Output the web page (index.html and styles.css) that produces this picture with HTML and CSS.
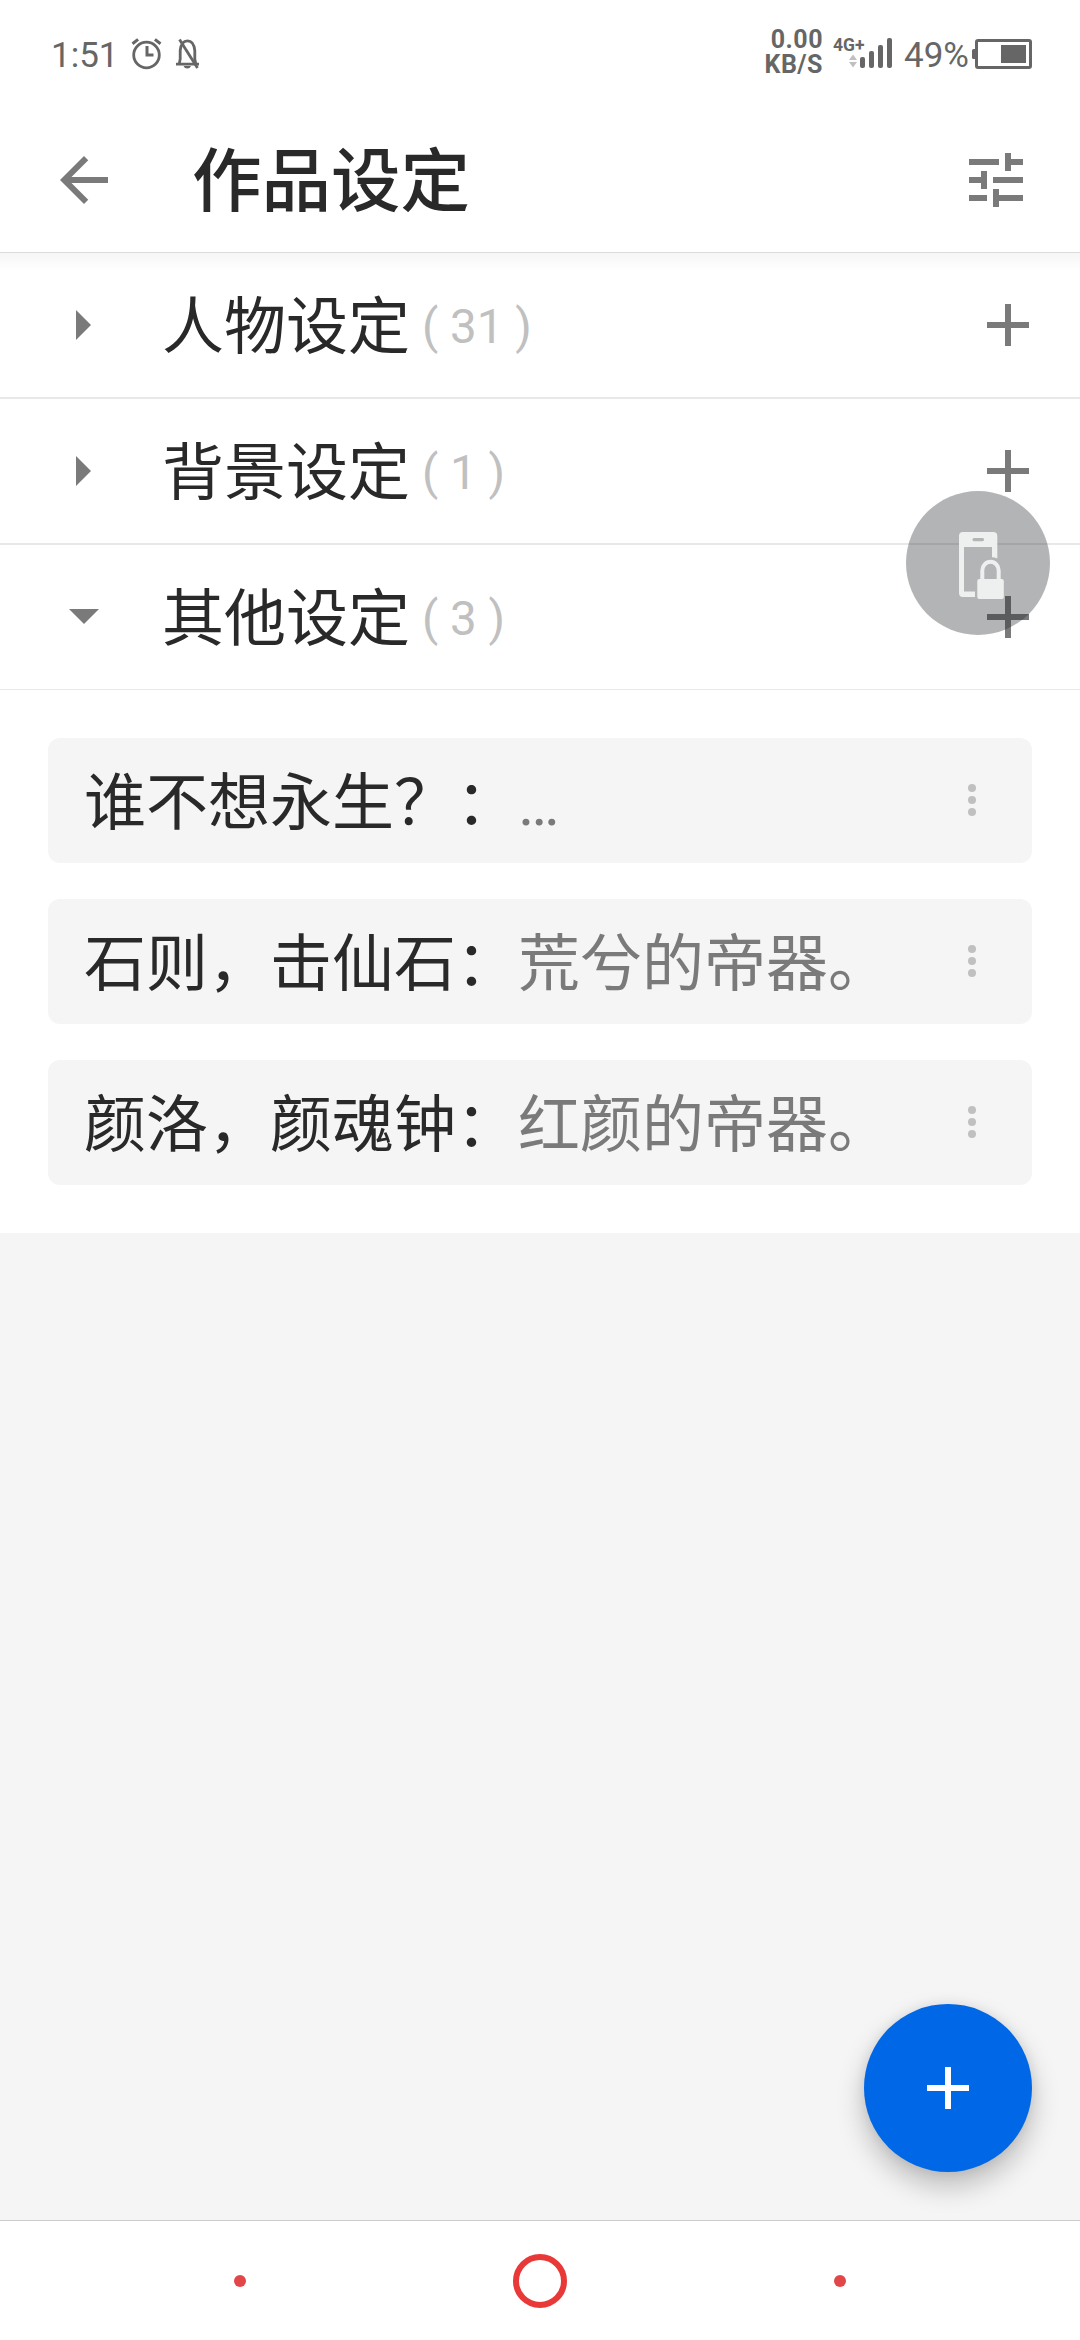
FILE: index.html
```html
<!DOCTYPE html>
<html lang="zh-CN">
<head>
  <meta charset="UTF-8">
  <title>作品设定</title>
  <link rel="stylesheet" href="styles.css">
</head>
<body>
  <div class="status-bar">
    <span class="time">1:51</span>
    <svg class="status-icons" width="72" height="36" viewBox="130 36 72 36">
      <g fill="none" stroke="#666" stroke-width="2.8">
        <circle cx="146.5" cy="55" r="12.8"/>
        <path d="M132.5 43.8l5.6-4.4M160.5 43.8l-5.6-4.4" stroke-width="3"/>
        <path d="M147 46v9h6.500" stroke-width="3"/>
        <path d="M176 64.200h23M179.200 64l1-5V50.500q1-9.700 7.300-9.700t7.300 9.700V59l1 5" stroke-width="2.800"/>
        <path d="M179.500 39.500L197.500 68"/>
      </g>
      <path d="M183.500 66h7.500q-1 2.500-3.700 2.500t-3.800-2.500z" fill="#666"/>
    </svg>
    <div class="status-right">
      <div class="speed">0.00<br>KB/S</div>
      <div class="signal">
        <span class="net">4G+</span>
        <svg width="60" height="36" viewBox="832 36 60 36">
          <path d="M848 60l4-5.500 4 5.500zM848 62l4 5.500 4-5.500z" fill="#c0c0c0"/>
          <g fill="#666">
            <rect x="859" y="57" width="5" height="11" rx="2"/>
            <rect x="868" y="51" width="5" height="17" rx="2"/>
            <rect x="877" y="45" width="5" height="23" rx="2"/>
            <rect x="886" y="38" width="5" height="30" rx="2"/>
          </g>
        </svg>
      </div>
      <span class="percent">49%</span>
      <svg class="battery" width="60" height="36" viewBox="972 36 60 36">
        <rect x="976.500" y="40.500" width="54" height="27" rx="1.500" fill="none" stroke="#666" stroke-width="3"/>
        <path d="M975 49h-1.500q-1.500 0-1.500 1.500v7q0 1.500 1.500 1.500h1.500zM1001 45h25v18h-25z" fill="#666"/>
      </svg>
    </div>
  </div>

  <div class="header">
    <svg class="icon" viewBox="0 0 24 24"><path d="M20 11H7.830l5.590-5.590L12 4l-8 8 8 8 1.410-1.410L7.830 13H20v-2z"/></svg>
    <h1 class="title">作品设定</h1>
    <svg class="icon" viewBox="0 0 24 24"><path d="M3 17v2h6v-2H3zM3 5v2h10V5H3zm10 16v-2h8v-2h-8v-2h-2v6h2zM7 9v2H3v2h4v2h2V9H7zm14 4v-2H11v2h10zm-6-4h2V7h4V5h-4V3h-2v6z"/></svg>
  </div>

  <div class="content">
    <div class="group first">
      <svg class="icon" viewBox="0 0 72 72"><path d="M28 21l15 15-15 15z"/></svg>
      <span class="group-name">人物设定</span>
      <span class="count">( 31 )</span>
      <svg class="icon add" viewBox="0 0 24 24"><path d="M19 13h-6v6h-2v-6H5v-2h6V5h2v6h6v2z"/></svg>
    </div>
    <div class="group">
      <svg class="icon" viewBox="0 0 72 72"><path d="M28 21l15 15-15 15z"/></svg>
      <span class="group-name">背景设定</span>
      <span class="count">( 1 )</span>
      <svg class="icon add" viewBox="0 0 24 24"><path d="M19 13h-6v6h-2v-6H5v-2h6V5h2v6h6v2z"/></svg>
    </div>
    <div class="group open">
      <svg class="icon" viewBox="0 0 72 72"><path d="M21 28h30l-15 15z"/></svg>
      <span class="group-name">其他设定</span>
      <span class="count">( 3 )</span>
      <svg class="icon add" viewBox="0 0 24 24"><path d="M19 13h-6v6h-2v-6H5v-2h6V5h2v6h6v2z"/></svg>
    </div>

    <div class="items">
      <div class="item">
        <span class="item-name">谁不想永生？：</span><span class="item-desc">…</span>
        <svg class="more" width="8" height="32" viewBox="0 0 8 32"><circle cx="4" cy="4" r="4"/><circle cx="4" cy="16" r="4"/><circle cx="4" cy="28" r="4"/></svg>
      </div>
      <div class="item">
        <span class="item-name">石则，击仙石：</span><span class="item-desc">荒兮的帝器。</span>
        <svg class="more" width="8" height="32" viewBox="0 0 8 32"><circle cx="4" cy="4" r="4"/><circle cx="4" cy="16" r="4"/><circle cx="4" cy="28" r="4"/></svg>
      </div>
      <div class="item">
        <span class="item-name">颜洛，颜魂钟：</span><span class="item-desc">红颜的帝器。</span>
        <svg class="more" width="8" height="32" viewBox="0 0 8 32"><circle cx="4" cy="4" r="4"/><circle cx="4" cy="16" r="4"/><circle cx="4" cy="28" r="4"/></svg>
      </div>
    </div>
  </div>

  <div class="nav-bar">
    <span class="nav-dot"></span>
    <span class="nav-home"></span>
    <span class="nav-dot"></span>
  </div>

  <!-- floating buttons -->
  <div class="lock-bubble">
    <svg width="144" height="144" viewBox="906 491 144 144" fill="#eef0f0">
      <path fill-rule="evenodd" d="M963 532h30.300q4 0 4 4v22.500q-2.500-1.300-5.300-1.300V547h-28v44.500h11v5.500h-12q-4 0-4-4v-57q0-4 4-4zM974 538a1.500 1.500 0 0 0 0 3.200h8.500a1.500 1.500 0 0 0 0-3.200z"/>
      <path d="M982.300 580v-9.500a8.200 8.700 0 0 1 16.400 0V580" fill="none" stroke="#eef0f0" stroke-width="4"/>
      <rect x="977.300" y="579" width="26.500" height="20" rx="2"/>
    </svg>
  </div>
  <div class="fab">
    <svg width="72" height="72" viewBox="0 0 24 24"><path fill="#fff" d="M19 13h-6v6h-2v-6H5v-2h6V5h2v6h6v2z"/></svg>
  </div>
</body>
</html>
```
FILE: styles.css
```css
* { box-sizing: border-box; }
body { margin: 0; width: 1080px; height: 2340px; display: flex; flex-direction: column; background: #f5f5f5; font-family: Roboto, "Noto Sans CJK SC", sans-serif; color: #292929; position: relative; overflow: hidden; }
svg { display: block; flex: none; }
.icon { width: 72px; height: 72px; fill: #7a7a7a; }

/* Status bar */
.status-bar { height: 108px; padding: 36px 48px 0 51px; display: flex; align-items: flex-start; background: #fff; color: #666; }
.time, .percent { font-size: 35px; line-height: 40px; }
.status-icons { margin-left: 11px; }
.status-right { margin-left: auto; display: flex; align-items: flex-start; }
.speed { margin: -8px 10px 0 0; font-size: 25px; line-height: 24.5px; font-weight: 700; letter-spacing: 0.5px; text-align: right; }
.signal { position: relative; margin-right: 11px; }
.net { position: absolute; left: 0; top: 0; font-size: 17.5px; line-height: 18px; font-weight: 700; }
.battery { margin-left: 3px; }

/* Header */
.header { height: 145px; padding: 0 48px; display: flex; align-items: center; background: #fff; border-bottom: 1px solid #dcdcdc; }
.title { flex: 1; margin: 0 0 0 72px; padding-top: 6px; font-size: 69.5px; line-height: 100px; font-weight: 500; }

/* Groups */
.content { flex: 1; }
.group { height: 146px; padding: 0 36px 0 48px; display: flex; align-items: center; background: #fff; border-bottom: 2px solid #e7e8e8; }
.group.first { background: linear-gradient(#f6f6f6, #fff 18px); }
.group.open { height: 145px; border-bottom-width: 1px; }
.group-name { margin-left: 42px; padding-top: 5px; font-size: 62px; line-height: 90px; }
.count { margin-left: 12px; padding-top: 3px; font-size: 47.5px; color: #c0c0c0; }
.add { margin-left: auto; }

.items { display: flex; flex-direction: column; gap: 36px; padding: 48px; background: #fff; }
.item { height: 125px; padding: 0 56px 0 36px; display: flex; align-items: center; background: #f5f5f5; border-radius: 12px; font-size: 62px; line-height: 90px; }
.item-name, .item-desc { padding-top: 7px; }
.item-desc { color: #7a7a7a; }
.more { margin: 0 0 2px auto; fill: #c0c0c0; }

/* System navigation */
.nav-bar { height: 120px; padding: 0 234px; display: flex; align-items: center; justify-content: space-between; background: #fff; border-top: 1px solid #ccc; }
.nav-dot { width: 12px; height: 12px; border-radius: 50%; background: #e24648; }
.nav-home { width: 54px; height: 54px; border: 6px solid #e83838; border-radius: 50%; }

.lock-bubble { position: absolute; left: 906px; top: 491px; width: 144px; height: 144px; border-radius: 50%; background: rgba(32, 35, 39, 0.34); }
.fab { position: absolute; right: 48px; bottom: 168px; width: 168px; height: 168px; display: flex; align-items: center; justify-content: center; border-radius: 50%; background: #0068e6; box-shadow: 0 14px 28px rgba(0, 0, 0, 0.24), 0 0 12px rgba(0, 0, 0, 0.08); }
```
